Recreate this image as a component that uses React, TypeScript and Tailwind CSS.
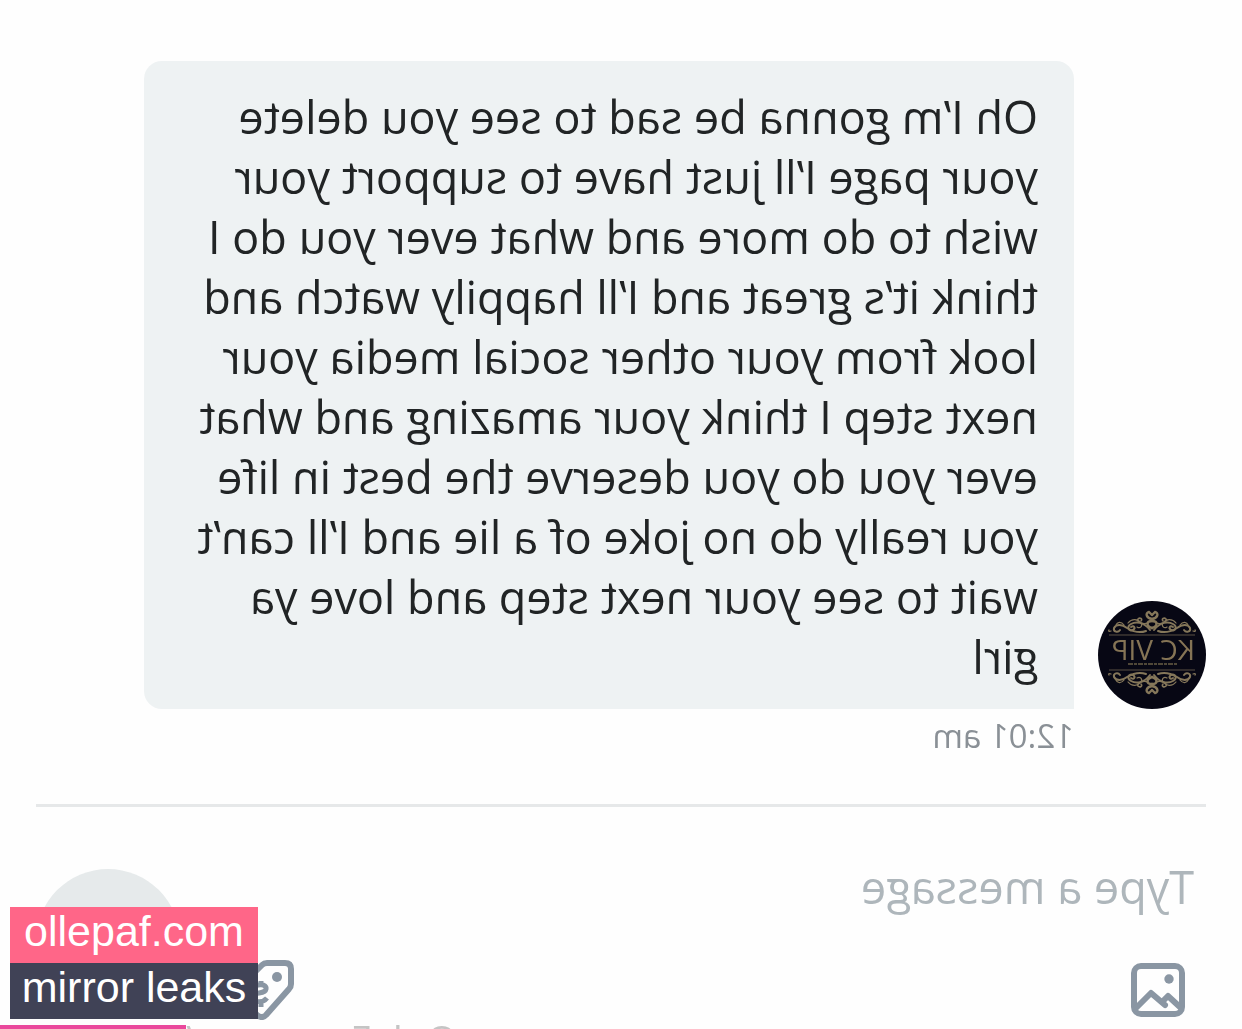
import React, { useState } from 'react';

const MESSAGE =
  'Oh I’m gonna be sad to see you delete your page I’ll just have to support your wish to do more and what ever you do I think it’s great and I’ll happily watch and look from your other social media your next step I think your amazing and what ever you do you deserve the best in life you really do no joke of a lie and I’ll can’t wait to see your next step and love ya girl';

// One half of the scroll work, the other half is mirrored from it
const ScrollHalf: React.FC = () => (
  <g fill="none" stroke="#85775a" strokeLinecap="round">
    <path strokeWidth="2" d="M52 29 C46 21 38 20 33 23 C28 26 31 31 35 29 C38 27 36 24 33 26" />
    <path strokeWidth="2" d="M48 30 C40 33 34 30 29 27 C24 23 18 23 16 27 C15 31 20 32 22 29" />
    <path strokeWidth="1.2" d="M30 22 C34 17 40 18 43 22 C45 25 42 28 39 26" />
    <path strokeWidth="1.2" d="M26 24 C23 20 19 21 18 24 M13 30 C11 31 10 30 11 29" />
    <path strokeWidth="1.6" d="M50 22 C45 24 38 21 40 18 C42 16 45 18 43 20" />
    <path strokeWidth="2.4" d="M54 18 C48 17 47 12 51 11 L54 14" />
    <path strokeWidth="2.4" d="M54 27 C48 25 48 20 54 20" />
  </g>
);

const Ornament: React.FC = () => (
  <>
    <ScrollHalf />
    <g transform="translate(108 0) scale(-1 1)">
      <ScrollHalf />
    </g>
    <path d="M11 34 H97" stroke="#5a5142" strokeWidth="1" />
  </>
);

const Avatar: React.FC = () => (
  <svg viewBox="0 0 108 108" className="size-27 shrink-0 rounded-full" role="img" aria-label="KC VIP">
    <rect width="108" height="108" fill="#070714" />
    <Ornament />
    <g transform="translate(0 103) scale(1 -1)">
      <Ornament />
    </g>
    <text x="11" y="59" fill="#857455" fontFamily="'Open Sans', sans-serif" fontSize="28">
      KC VIP
    </text>
    <path d="M29 63 H79" stroke="#4f4738" strokeWidth="2" strokeDasharray="3 1 5 1" />
  </svg>
);

const ImageIcon: React.FC = () => (
  <svg viewBox="0 0 54 54" className="size-[54px]" fill="none" stroke="#8a96a3" strokeWidth="6" aria-hidden="true">
    <rect x="3" y="3" width="48" height="48" rx="7" />
    <path d="M4 45 L17 33 L22 38 M20 42 L34 30 L50 46" strokeLinejoin="round" strokeLinecap="round" />
    <circle cx="16" cy="16" r="4.7" fill="#8a96a3" stroke="none" />
  </svg>
);

const TagIcon: React.FC = () => (
  <svg viewBox="0 0 60 60" className="size-15" fill="none" stroke="#8a96a3" strokeWidth="6" aria-hidden="true">
    <path
      d="M9 3 H27 Q30 3 32 5 L55 28 Q58 32 55 36 L37 55 Q32 59 28 55 L5 29 Q3 27 3 24 V9 Q3 3 9 3 Z"
      strokeLinejoin="round"
    />
    <circle cx="17" cy="17" r="5" fill="#8a96a3" stroke="none" />
    <path d="M41 28 C37 23 27 24 28 29 C29 35 41 31 41 37 C41 43 31 43 27 38 M33 21 V26 M33 41 V47" strokeWidth="5" />
  </svg>
);

const App: React.FC = () => {
  const [text, setText] = useState('');

  return (
    <div className="relative h-screen overflow-hidden bg-[#fefefe] font-['Open_Sans',sans-serif]">
      <main className="-scale-x-100">
        <section className="px-9 pt-[61px]">
          <div className="flex items-end gap-6 pr-27">
            <Avatar />
            <p className="flex-1 rounded-[18px] rounded-bl-none bg-[#eef2f3] px-9 pt-[26px] pb-[22px] text-[45px] leading-15 text-[#212425]">
              {MESSAGE}
            </p>
          </div>
          <time className="mt-[3px] ml-33 block text-[33px] leading-12 text-[#8a9096]">12:01 am</time>
        </section>

        <hr className="mx-9 mt-11 border-t-3 border-[#e6e8e9]" />

        <form className="flex gap-[54px] px-9 pt-[50px]" onSubmit={(e) => e.preventDefault()}>
          <div className="flex min-w-0 flex-1 flex-col gap-[43px] pl-3">
            <input
              type="text"
              aria-label="Type a message"
              placeholder="Type a message"
              value={text}
              onChange={(e) => setText(e.target.value)}
              className="h-15 w-full bg-transparent text-[45px] leading-15 outline-none placeholder:text-[#aeb6bb]"
            />
            <div className="flex items-center justify-between pl-[9px]">
              <button type="button" aria-label="Add image">
                <ImageIcon />
              </button>
              <button type="button" aria-label="Set price">
                <TagIcon />
              </button>
            </div>
          </div>
          <button type="submit" aria-label="Send" className="mt-3 size-36 shrink-0 rounded-full bg-[#e6eaeb]" />
        </form>

        <span className="absolute top-[1011px] left-[785px] text-[39px] leading-14 text-[#c4c4c4]">
          OnlyFans.com/
        </span>
      </main>

      <div className="absolute bottom-0 left-0">
        <div className="ml-2.5 w-62 text-center font-['Liberation_Sans',sans-serif] text-[43px] leading-12 text-white">
          <div className="bg-[#ff6688] pb-2">ollepaf.com</div>
          <div className="bg-[#404256] pb-2">mirror leaks</div>
        </div>
        <div className="mt-1.5 h-1 w-[186px] bg-[#ea489c]" />
      </div>
    </div>
  );
};

export default App;
